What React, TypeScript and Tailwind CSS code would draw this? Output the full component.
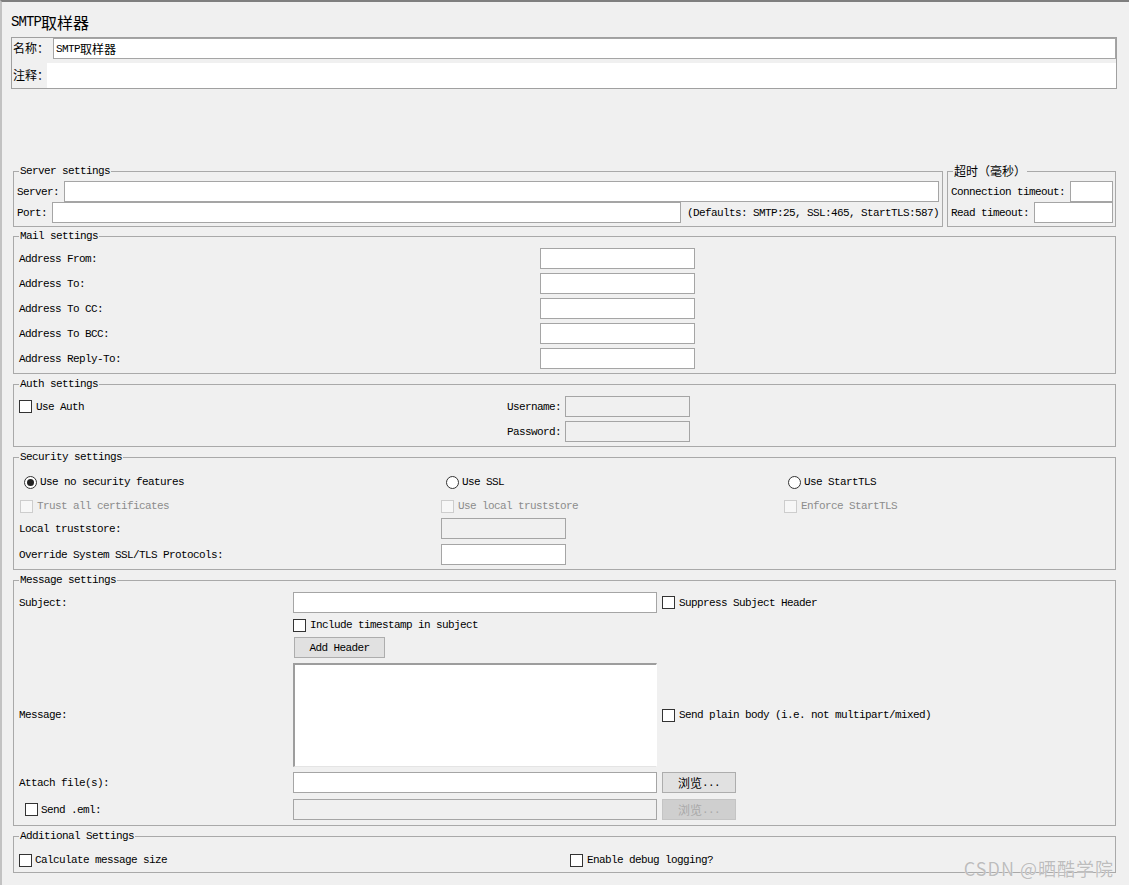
import React from "react";

const MONO = "font-['Liberation_Mono','Noto_Sans_CJK_SC',monospace]";

// CJK glyphs sit at 12px in the original Swing UI, latin at ~6px advance
const Cn = ({ children, className = "" }: { children: React.ReactNode; className?: string }) => (
  <span className={`font-['Noto_Sans_CJK_SC',sans-serif] text-[12px] tracking-normal ${className}`}>{children}</span>
);

const Field = ({ disabled = false, className = "" }: { disabled?: boolean; className?: string }) => (
  <div
    className={`h-[21px] border border-[#a5a5a5] shrink-0 ${disabled ? "bg-[#f0f0f0]" : "bg-white"} ${className}`}
  />
);

const Box = ({ disabled = false }: { disabled?: boolean }) => (
  <span
    className={`inline-block w-[13px] h-[13px] shrink-0 border ${
      disabled ? "border-[#cdcdcd] bg-[#f7f7f7]" : "border-[#333333] bg-white"
    }`}
  />
);

const Check = ({
  label,
  disabled = false,
  className = "gap-[4px]",
}: {
  label: string;
  disabled?: boolean;
  className?: string;
}) => (
  <div className={`flex items-center ${className}`}>
    <Box disabled={disabled} />
    <span className={`whitespace-nowrap ${disabled ? "text-[#8c8c8c]" : ""}`}>{label}</span>
  </div>
);

const Radio = ({ label, checked = false }: { label: string; checked?: boolean }) => (
  <div className="flex items-center gap-[3px]">
    <span className="w-[13px] h-[13px] rounded-full border border-[#333333] bg-white flex items-center justify-center shrink-0">
      {checked && <span className="w-[7px] h-[7px] rounded-full bg-[#222222]" />}
    </span>
    <span className="whitespace-nowrap">{label}</span>
  </div>
);

const Button = ({
  children,
  disabled = false,
  className = "",
}: {
  children: React.ReactNode;
  disabled?: boolean;
  className?: string;
}) => (
  <div
    className={`h-[21px] flex items-center justify-center border shrink-0 ${
      disabled ? "bg-[#cfcfcf] border-[#c4c4c4] text-[#a9a9a9]" : "bg-[#e1e1e1] border-[#adadad]"
    } ${className}`}
  >
    {children}
  </div>
);

const Group = ({
  title,
  className = "",
  legendClass = "",
  children,
}: {
  title: React.ReactNode;
  className?: string;
  legendClass?: string;
  children: React.ReactNode;
}) => (
  <fieldset className={`border border-[#a9a9a9] min-w-0 ${className}`}>
    <legend className={`px-[1px] h-[12px] leading-[12px] ${legendClass}`}>{title}</legend>
    {children}
  </fieldset>
);

const Row = ({ children, className = "" }: { children: React.ReactNode; className?: string }) => (
  <div className={`flex items-center h-[21px] ${className}`}>{children}</div>
);

export default function App() {
  const mail = ["Address From:", "Address To:", "Address To CC:", "Address To BCC:", "Address Reply-To:"];

  return (
    <div
      className={`relative min-h-[885px] w-full bg-[#f0f0f0] border-t-2 border-t-[#7f7f7f] border-l-2 border-l-[#c2c2c2] text-black ${MONO} text-[11px] tracking-[-0.6px] leading-[12px]`}
    >
      {/* title */}
      <div className="pt-[10px] pl-[9px] h-[30px] flex items-center text-[14px] tracking-[-0.9px] leading-[20px]">
        <span>SMTP</span>
        <Cn className="text-[16px]">取样器</Cn>
      </div>

      {/* name / comment */}
      <div className="mt-[5px] ml-[9px] mr-[12px] border border-[#a0a0a0] flex flex-col">
        <div className="flex items-center h-[21px]">
          <span className="w-[41px] pl-[1px] shrink-0 whitespace-nowrap">
            <Cn>名称：</Cn>
          </span>
          <div className="flex-1 h-[21px] bg-white border border-[#a5a5a5] flex items-center pl-[2px]">
            <span>SMTP</span>
            <Cn>取样器</Cn>
          </div>
        </div>
        <div className="flex items-center h-[25px] mt-[4px]">
          <span className="w-[35px] pl-[1px] shrink-0 whitespace-nowrap">
            <Cn>注释：</Cn>
          </span>
          <div className="flex-1 h-full bg-white" />
        </div>
      </div>

      <div className="ml-[11px] mr-[13px] flex flex-col">
        {/* server + timeout */}
        <div className="mt-[76px] flex gap-[4px]">
          <Group title="Server settings" className="flex-1 px-[3px] pt-[4px] pb-[3px]" legendClass="ml-[2px]">
            <Row>
              <span className="w-[47px] shrink-0">Server:</span>
              <Field className="flex-1" />
            </Row>
            <Row>
              <span className="w-[35px] shrink-0">Port:</span>
              <Field className="flex-1" />
              <span className="ml-[6px] whitespace-nowrap">(Defaults: SMTP:25, SSL:465, StartTLS:587)</span>
            </Row>
          </Group>
          <Group
            title={<Cn>超时（毫秒）</Cn>}
            className="w-[169px] pl-[3px] pr-[2px] pt-[4px] pb-[3px]"
            legendClass="ml-[2px]"
          >
            <Row>
              <span className="w-[119px] shrink-0 whitespace-nowrap">Connection timeout:</span>
              <Field className="flex-1" />
            </Row>
            <Row>
              <span className="w-[83px] shrink-0 whitespace-nowrap">Read timeout:</span>
              <Field className="flex-1" />
            </Row>
          </Group>
        </div>

        {/* mail */}
        <Group title="Mail settings" className="mt-[3px] px-[5px] pt-[6px] pb-[4px]">
          <div className="flex flex-col gap-[4px]">
            {mail.map((m) => (
              <Row key={m}>
                <span className="w-[521px] shrink-0">{m}</span>
                <Field className="w-[155px]" />
              </Row>
            ))}
          </div>
        </Group>

        {/* auth */}
        <Group title="Auth settings" className="mt-[4px] px-[5px] pt-[6px] pb-[4px]">
          <div className="flex">
            <div className="w-[488px] shrink-0 h-[21px] flex items-center">
              <Check label="Use Auth" />
            </div>
            <div className="grid grid-cols-[auto_125px] gap-x-[4px] gap-y-[4px] items-center">
              <span className="text-right">Username:</span>
              <Field disabled />
              <span className="text-right">Password:</span>
              <Field disabled />
            </div>
          </div>
        </Group>

        {/* security */}
        <Group title="Security settings" className="mt-[4px] px-[5px] pt-[9px] pb-[4px]">
          <div className="flex flex-col">
            <div className="flex items-center h-[20px]">
              <div className="w-[422px] shrink-0 pl-[5px]">
                <Radio label="Use no security features" checked />
              </div>
              <div className="w-[343px] shrink-0 pl-[5px]">
                <Radio label="Use SSL" />
              </div>
              <div className="pl-[4px]">
                <Radio label="Use StartTLS" />
              </div>
            </div>
            <div className="flex items-center h-[20px] mt-[4px]">
              <div className="w-[422px] shrink-0 pl-[1px]">
                <Check label="Trust all certificates" disabled />
              </div>
              <div className="w-[343px] shrink-0">
                <Check label="Use local truststore" disabled />
              </div>
              <Check label="Enforce StartTLS" disabled />
            </div>
            <Row className="mt-[2px]">
              <span className="w-[422px] shrink-0">Local truststore:</span>
              <Field disabled className="w-[125px]" />
            </Row>
            <Row className="mt-[5px]">
              <span className="w-[422px] shrink-0">Override System SSL/TLS Protocols:</span>
              <Field className="w-[125px]" />
            </Row>
          </div>
        </Group>

        {/* message */}
        <Group title="Message settings" className="mt-[4px] px-[5px] pt-[6px] pb-[5px]">
          <div className="flex flex-col">
            <Row>
              <span className="w-[274px] shrink-0">Subject:</span>
              <Field className="w-[364px]" />
              <Check label="Suppress Subject Header" className="gap-[4px] ml-[5px]" />
            </Row>
            <div className="flex items-center h-[24px]">
              <span className="w-[274px] shrink-0" />
              <Check label="Include timestamp in subject" />
            </div>
            <Row>
              <span className="w-[275px] shrink-0" />
              <Button className="w-[91px]">Add Header</Button>
            </Row>
            <div className="flex items-center h-[104px] mt-[5px]">
              <span className="w-[274px] shrink-0">Message:</span>
              <div className="w-[364px] h-full bg-white border-t-2 border-l-2 border-t-[#9d9d9d] border-l-[#9d9d9d] border-r border-b border-r-white border-b-[#e4e4e4]" />
              <Check label="Send plain body (i.e. not multipart/mixed)" className="gap-[4px] ml-[5px]" />
            </div>
            <Row className="mt-[5px]">
              <span className="w-[274px] shrink-0">Attach file(s):</span>
              <Field className="w-[364px]" />
              <Button className="w-[74px] ml-[5px]">
                <Cn>浏览</Cn>
                <span>...</span>
              </Button>
            </Row>
            <Row className="mt-[6px]">
              <div className="w-[274px] shrink-0 pl-[6px]">
                <Check label="Send .eml:" className="gap-[3px]" />
              </div>
              <Field disabled className="w-[364px]" />
              <Button disabled className="w-[74px] ml-[5px]">
                <Cn>浏览</Cn>
                <span>...</span>
              </Button>
            </Row>
          </div>
        </Group>

        {/* additional */}
        <Group title="Additional Settings" className="mt-[4px] px-[5px] pt-[8px] pb-[2px]">
          <div className="flex items-center h-[20px]">
            <div className="w-[551px] shrink-0">
              <Check label="Calculate message size" className="gap-[3px]" />
            </div>
            <Check label="Enable debug logging?" />
          </div>
        </Group>
      </div>

      {/* watermark */}
      <div className="absolute right-[15px] bottom-[8px] font-['Noto_Sans_CJK_SC',sans-serif] text-[18px] leading-none tracking-[1px] text-[#bdbdbd] [text-shadow:0_0_1px_#ffffff]">
        CSDN @晒酷学院
      </div>
    </div>
  );
}
